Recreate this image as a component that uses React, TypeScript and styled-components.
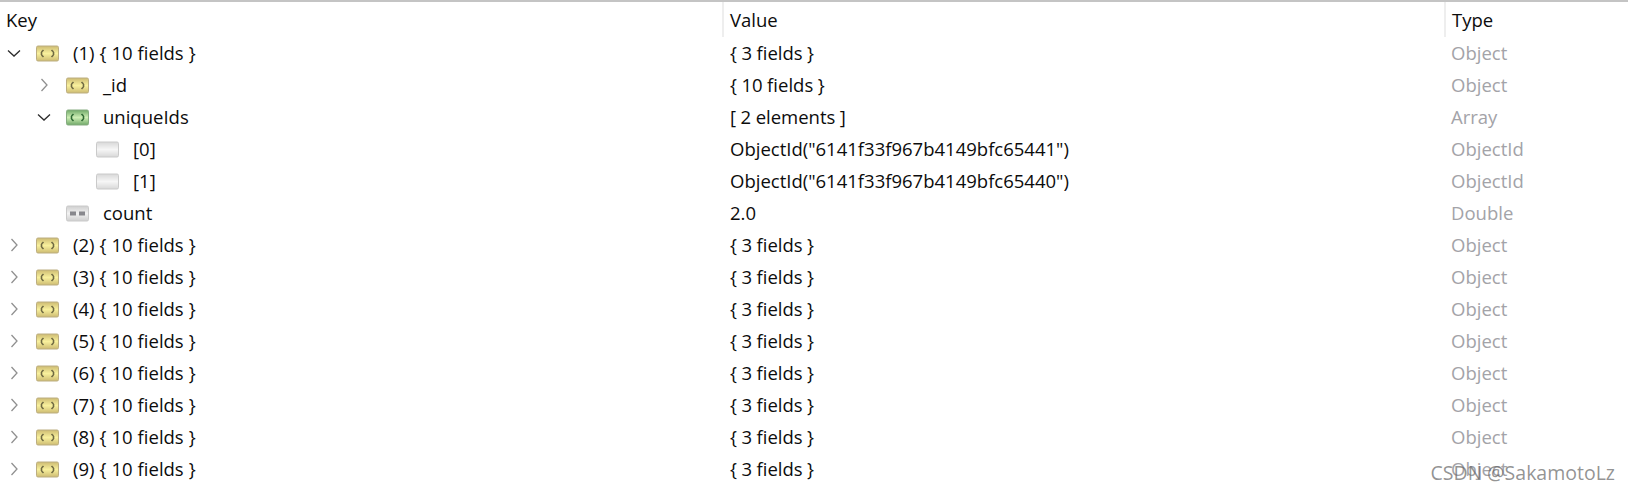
import React, { FC } from "react";
import styled, { createGlobalStyle } from "styled-components";

const GlobalStyle = createGlobalStyle`
	html, body {
		margin: 0;
		padding: 0;
		background: #fff;
	}
`;

const Page = styled.div`
	position: relative;
	width: 1628px;
	height: 490px;
	overflow: hidden;
	background: #fff;
	border-top: 2px solid #c4c4c4;
	box-sizing: border-box;
	font-family: "Open Sans", "Noto Sans", sans-serif;
	font-size: 18.5px;
	word-spacing: -0.3px;
	color: #0c0c0c;
`;

const Columns = styled.div`
	display: grid;
	grid-template-columns: 724px 722px 1fr;
`;

const HeaderRow = styled(Columns)`
	height: 35px;
`;

const HeaderCell = styled.div<{ $last?: boolean }>`
	display: flex;
	align-items: center;
	padding-left: 6px;
	border-right: ${(p) => (p.$last ? "none" : "2px solid #eeeeee")};
`;

const Row = styled(Columns)`
	height: 32px;
	align-items: center;
`;

const KeyCell = styled.div<{ $depth: number }>`
	display: flex;
	align-items: center;
	padding-left: ${(p) => 6 + p.$depth * 30}px;
`;

const Toggle = styled.span`
	display: flex;
	align-items: center;
	justify-content: center;
	width: 16px;
	height: 16px;
	margin-right: 14px;
`;

const IconSlot = styled.span`
	display: flex;
	margin-right: 14px;
	filter: blur(0.35px);
`;

const KeyLabel = styled.span`
	margin-bottom: 2px;
	word-spacing: 0.2px;
`;

const ValueCell = styled.div`
	padding-left: 6px;
	margin-bottom: 2px;
`;

const TypeCell = styled.div`
	padding-left: 5px;
	margin-bottom: 2px;
	color: #a3a3a8;
`;

const Watermark = styled.div`
	position: absolute;
	right: 13px;
	bottom: 4px;
	font-size: 19.5px;
	color: rgba(100, 100, 100, 0.7);
`;

const Chevron: FC<{ open: boolean }> = ({ open }) => (
	<svg width="16" height="16" viewBox="0 0 16 16" fill="none">
		<path
			d={open ? "M2 5.5 L8 11 L14 5.5" : "M5.5 2 L11 8 L5.5 14"}
			stroke={open ? "#2c2c2c" : "#909090"}
			strokeWidth="1.3"
		/>
	</svg>
);

type Kind = "object" | "array" | "value" | "number";

const palette: Record<Kind, { mid: string; end: string; edge: string; mark: string }> = {
	object: { mid: "#f8f09c", end: "#cdbb72", edge: "#bcae80", mark: "#6f6a42" },
	array: { mid: "#cdeeb4", end: "#6fa868", edge: "#86ac80", mark: "#2f6a34" },
	value: { mid: "#f6f6f6", end: "#d8d8d8", edge: "#cacaca", mark: "#f0f0f0" },
	number: { mid: "#f2f2f2", end: "#cfcfcf", edge: "#cacaca", mark: "#66666c" },
};

const FieldIcon: FC<{ kind: Kind }> = ({ kind }) => {
	const c = palette[kind];
	const id = `grad-${kind}`;
	return (
		<svg width="23" height="17" viewBox="0 0 23 17">
			<defs>
				<linearGradient id={id} x1="0" y1="0" x2="0" y2="1">
					<stop offset="0" stopColor={c.end} />
					<stop offset="0.5" stopColor={c.mid} />
					<stop offset="1" stopColor={c.end} />
				</linearGradient>
			</defs>
			<rect x="0.5" y="1" width="22" height="15" rx="1.5" fill={`url(#${id})`} stroke={c.edge} />
			{kind === "number" && (
				<path d="M4 6.5h6v4h-6zM13 6.5h6v4h-6z" fill={c.mark} opacity="0.75" />
			)}
			{(kind === "object" || kind === "array") && (
				<path d="M7.5 5 L5.5 7 M5.5 7v3 M5.5 10 L7.5 12 M15.5 5 L17.5 7 M17.5 7v3 M17.5 10 L15.5 12" stroke={c.mark} strokeWidth="1.6" fill="none" />
			)}
		</svg>
	);
};

interface Field {
	depth: number;
	toggle?: "open" | "closed";
	kind: Kind;
	name: string;
	value: string;
	type: string;
}

const doc = (n: number, open = false): Field => ({
	depth: 0,
	toggle: open ? "open" : "closed",
	kind: "object",
	name: `(${n}) { 10 fields }`,
	value: "{ 3 fields }",
	type: "Object",
});

const rows: Field[] = [
	doc(1, true),
	{ depth: 1, toggle: "closed", kind: "object", name: "_id", value: "{ 10 fields }", type: "Object" },
	{ depth: 1, toggle: "open", kind: "array", name: "uniqueIds", value: "[ 2 elements ]", type: "Array" },
	{ depth: 2, kind: "value", name: "[0]", value: 'ObjectId("6141f33f967b4149bfc65441")', type: "ObjectId" },
	{ depth: 2, kind: "value", name: "[1]", value: 'ObjectId("6141f33f967b4149bfc65440")', type: "ObjectId" },
	{ depth: 1, kind: "number", name: "count", value: "2.0", type: "Double" },
	...[2, 3, 4, 5, 6, 7, 8, 9].map((n) => doc(n)),
];

const App: FC = () => (
	<>
		<GlobalStyle />
		<Page>
			<HeaderRow>
				<HeaderCell>Key</HeaderCell>
				<HeaderCell>Value</HeaderCell>
				<HeaderCell $last>Type</HeaderCell>
			</HeaderRow>
			{rows.map((row, i) => (
				<Row key={i}>
					<KeyCell $depth={row.depth}>
						<Toggle>{row.toggle && <Chevron open={row.toggle === "open"} />}</Toggle>
						<IconSlot>
							<FieldIcon kind={row.kind} />
						</IconSlot>
						<KeyLabel>{row.name}</KeyLabel>
					</KeyCell>
					<ValueCell>{row.value}</ValueCell>
					<TypeCell>{row.type}</TypeCell>
				</Row>
			))}
			<Watermark>CSDN @SakamotoLz</Watermark>
		</Page>
	</>
);

export default App;
